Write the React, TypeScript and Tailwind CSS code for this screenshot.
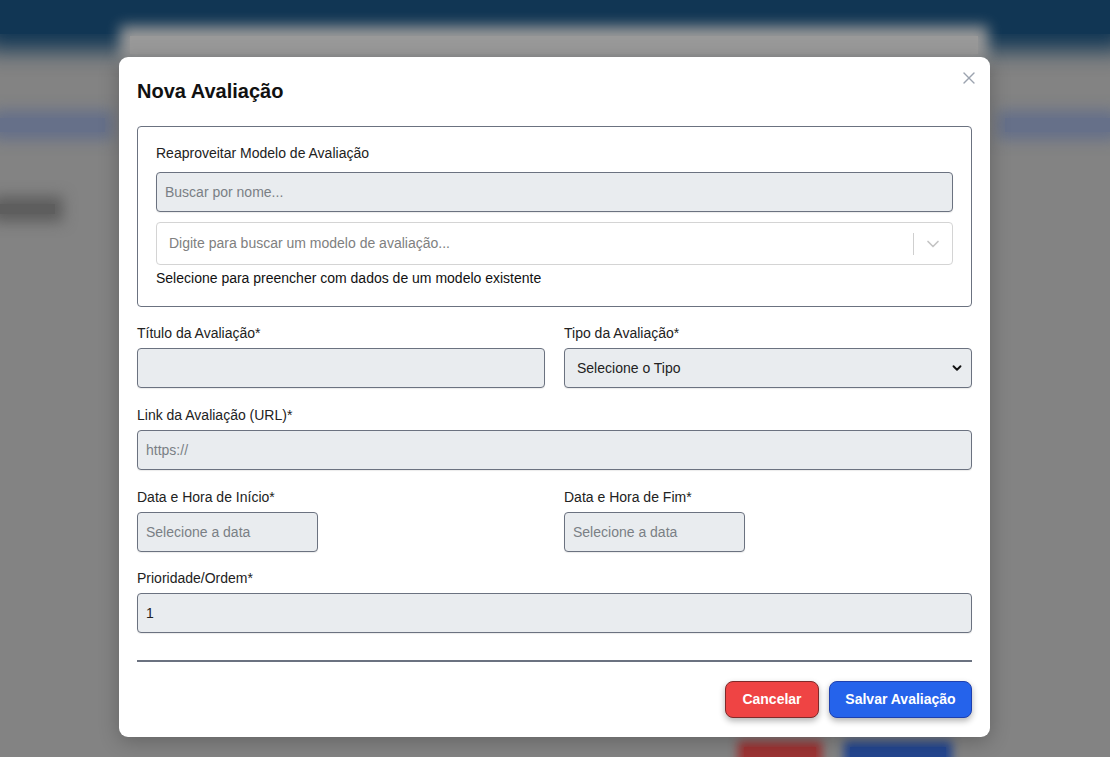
import React from 'react';
import { X, ChevronDown } from 'lucide-react';

const inputBase =
  'w-full h-10 rounded-[4px] border-[1.5px] border-[#6b7280] bg-[#e9ecef] px-2 text-[14px] text-[#222] placeholder:text-[#7a7f85] shadow-[0_1px_1px_rgba(0,0,0,0.08)] outline-none';

const Label = ({ children }: { children: React.ReactNode }) => (
  <label className="block text-[14px] leading-5 text-[#222] pb-[5px]">{children}</label>
);

const App = () => {
  return (
    <div className="relative w-[1110px] h-[757px] overflow-hidden bg-[#838383]" style={{ fontFamily: '"Liberation Sans", Arial, sans-serif' }}>
      {/* PAGINA DE FUNDO (desfocada, sob o overlay) */}
      <div className="absolute inset-0">
        <div className="absolute left-0 top-0 w-full h-[34px] bg-[#113654] shadow-[0_0_22px_16px_#113654]" />
        <div className="absolute left-[130px] top-[36px] w-[848px] h-[18px] bg-[#999999] shadow-[0_0_14px_10px_#999999]" />
        <div className="absolute left-0 top-[118px] w-[105px] h-[14px] bg-[#667089] shadow-[0_0_14px_8px_#667089]" />
        <div className="absolute right-0 top-[118px] w-[105px] h-[14px] bg-[#667089] shadow-[0_0_14px_8px_#667089]" />
        <div className="absolute left-0 top-[204px] w-[55px] h-[10px] bg-[#5e5e5e] shadow-[0_0_14px_8px_#5e5e5e]" />
        <div className="absolute left-[744px] top-[747px] w-[72px] h-[16px] bg-[#9c3434] shadow-[0_0_10px_6px_#9c3434]" />
        <div className="absolute left-[850px] top-[747px] w-[96px] h-[16px] bg-[#24468f] shadow-[0_0_10px_6px_#24468f]" />
      </div>

      {/* MODAL */}
      <div className="relative pt-[57px] pl-[119px]">
        <div className="relative w-[871px] bg-white rounded-[9px] px-[18px] pt-[20px] pb-[19px] shadow-[0_4px_20px_rgba(0,0,0,0.25)]">
          <button className="absolute right-[11px] top-[11px] text-[#9ca3af]">
            <X size={20} strokeWidth={1.6} />
          </button>
          <h2 className="text-[20px] leading-[28px] font-bold text-[#111] mb-[21px]">Nova Avaliação</h2>

          {/* REAPROVEITAR MODELO */}
          <div className="border border-[#6b7280] rounded-[4px] px-[18px] pt-[16px] pb-[18px]">
            <Label>Reaproveitar Modelo de Avaliação</Label>
            <div className="pt-[4px]">
              <input className={inputBase} placeholder="Buscar por nome..." />
            </div>
            <div className="mt-[10px] h-[43px] rounded-[4px] border border-[#d4d4d4] flex items-center">
              <span className="flex-1 pl-3 text-[14px] text-[#808080]">Digite para buscar um modelo de avaliação...</span>
              <span className="w-px h-[22px] bg-[#cfcfcf]" />
              <span className="px-[9px] text-[#c4c4c4]">
                <ChevronDown size={20} strokeWidth={2} />
              </span>
            </div>
            <p className="mt-[3px] text-[14px] leading-5 text-[#111]">Selecione para preencher com dados de um modelo existente</p>
          </div>

          {/* TITULO + TIPO */}
          <div className="grid grid-cols-2 gap-[19px] mt-[16px]">
            <div>
              <Label>Título da Avaliação*</Label>
              <input className={inputBase} />
            </div>
            <div>
              <Label>Tipo da Avaliação*</Label>
              <div className="relative">
                <div className={`${inputBase} flex items-center px-3 text-[#111]`}>Selecione o Tipo</div>
                <ChevronDown size={14} strokeWidth={3.2} className="absolute right-[8px] top-[13px] text-[#111]" />
              </div>
            </div>
          </div>

          <div className="mt-[17px]">
            <Label>Link da Avaliação (URL)*</Label>
            <input className={inputBase} placeholder="https://" />
          </div>

          <div className="grid grid-cols-2 gap-[19px] mt-[17px]">
            <div>
              <Label>Data e Hora de Início*</Label>
              <input className={`${inputBase} !w-[181px]`} placeholder="Selecione a data" />
            </div>
            <div>
              <Label>Data e Hora de Fim*</Label>
              <input className={`${inputBase} !w-[181px]`} placeholder="Selecione a data" />
            </div>
          </div>

          <div className="mt-[16px]">
            <Label>Prioridade/Ordem*</Label>
            <input className={inputBase} defaultValue="1" />
          </div>

          <div className="mt-[27px] h-[2px] bg-[#6b7280]" />

          <div className="flex justify-end gap-[10px] mt-[19px]">
            <button className="w-[94px] h-[37px] rounded-lg bg-[#ef4444] border border-[#7f2a2a] text-white font-bold text-[14px] shadow-[0_3px_6px_rgba(0,0,0,0.3)]">
              Cancelar
            </button>
            <button className="w-[143px] h-[37px] rounded-lg bg-[#2563eb] border border-[#1e40af] text-white font-bold text-[14px] shadow-[0_3px_6px_rgba(0,0,0,0.3)]">
              Salvar Avaliação
            </button>
          </div>
        </div>
      </div>
    </div>
  );
};

export default App;
